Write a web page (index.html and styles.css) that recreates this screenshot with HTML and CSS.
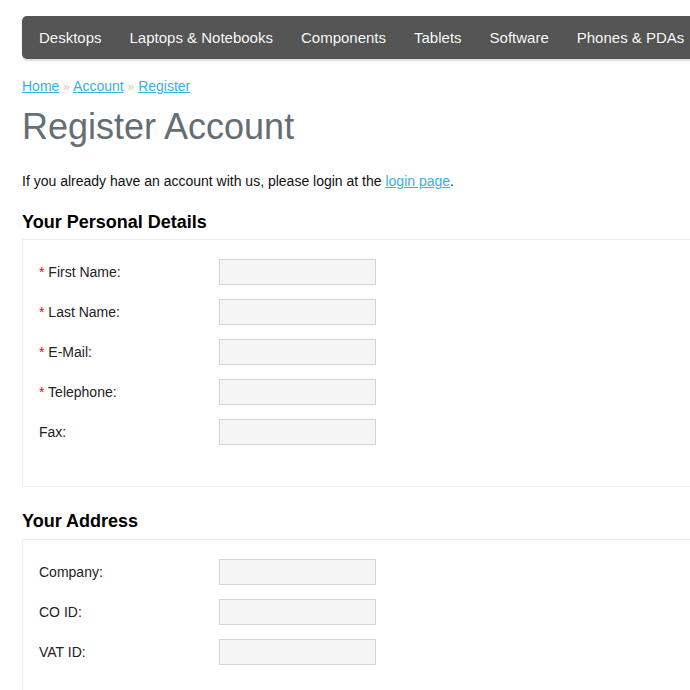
FILE: index.html
```html
<!DOCTYPE html>
<html lang="en">
<head>
    <meta charset="UTF-8">
    <title>Register Account</title>
    <link rel="stylesheet" href="styles.css">
</head>
<body>
    <div class="page">
        <nav class="menu">
            <a href="#">Desktops</a>
            <a href="#">Laptops &amp; Notebooks</a>
            <a href="#">Components</a>
            <a href="#">Tablets</a>
            <a href="#">Software</a>
            <a href="#">Phones &amp; PDAs</a>
        </nav>

        <div class="breadcrumb">
            <a href="#">Home</a> <span class="sep">&raquo;</span>
            <a href="#">Account</a> <span class="sep">&raquo;</span>
            <a href="#">Register</a>
        </div>

        <h1>Register Account</h1>
        <p class="intro">If you already have an account with us, please login at the <a href="#">login page</a>.</p>

        <h2>Your Personal Details</h2>
        <div class="box personal">
            <div class="row"><label><span class="req">*</span> First Name:</label><input type="text"></div>
            <div class="row"><label><span class="req">*</span> Last Name:</label><input type="text"></div>
            <div class="row"><label><span class="req">*</span> E-Mail:</label><input type="text"></div>
            <div class="row"><label><span class="req">*</span> Telephone:</label><input type="text"></div>
            <div class="row"><label>Fax:</label><input type="text"></div>
        </div>

        <h2 class="next">Your Address</h2>
        <div class="box address">
            <div class="row"><label>Company:</label><input type="text"></div>
            <div class="row"><label>CO ID:</label><input type="text"></div>
            <div class="row"><label>VAT ID:</label><input type="text"></div>
        </div>
    </div>
</body>
</html>
```
FILE: styles.css
```css
/* styles.css */

* {
    box-sizing: border-box;
    margin: 0;
    padding: 0;
}

body {
    font-family: "Liberation Sans", Arial, sans-serif;
    font-size: 14px;
    color: #000;
    background: #fff;
    overflow: hidden;
}

.page {
    width: 980px;
    padding-left: 22px;
}

.menu {
    margin-top: 16px;
    height: 43px;
    background: #555;
    border-radius: 5px;
    box-shadow: 0 2px 2px #ddd;
    display: flex;
    gap: 28px;
    padding-left: 17px;
    white-space: nowrap;
}

.menu a {
    color: #fff;
    font-size: 15px;
    line-height: 43px;
    text-decoration: none;
    text-shadow: 0 0 1px rgba(0, 0, 0, 0.4);
}

.breadcrumb {
    margin-top: 19px;
    line-height: 16px;
    color: #bbb;
}

.breadcrumb a,
.intro a {
    color: #38b0e3;
}

.breadcrumb .sep {
    font-size: 12px;
    color: #ccc;
}

h1 {
    margin-top: 12px;
    font-size: 36px;
    line-height: 40px;
    font-weight: normal;
    color: #636e75;
}

.intro {
    margin-top: 26px;
    line-height: 16px;
    color: #111;
}

h2 {
    margin-top: 22px;
    font-size: 18px;
    line-height: 22px;
    font-weight: bold;
    color: #000;
}

h2.next {
    margin-top: 23px;
}

.box {
    margin-top: 6px;
    border: 1px solid #eee;
    padding: 19px 16px 41px;
    display: flex;
    flex-direction: column;
    gap: 14px;
}

.box.address {
    margin-top: 7px;
}

.row {
    display: flex;
    align-items: center;
}

.row label {
    width: 180px;
    color: #222;
}

.req {
    color: #f00;
}

.row input {
    width: 157px;
    height: 26px;
    border: 1px solid #d3d3d3;
    background: #f5f5f5;
}
```
